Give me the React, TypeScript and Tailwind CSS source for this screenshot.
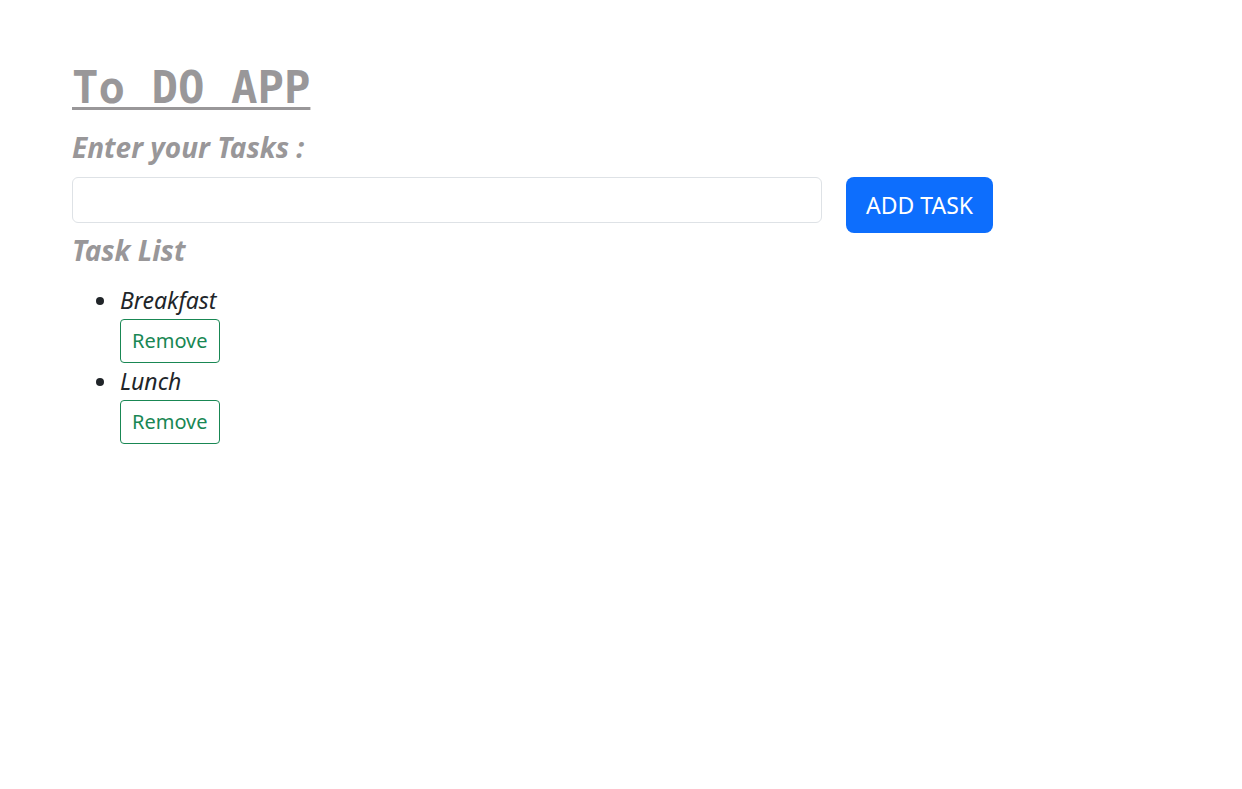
import { useState } from 'react'

const App = () => {
  const [tasks, setTasks] = useState<string[]>(['Breakfast', 'Lunch'])
  const [value, setValue] = useState('')

  const addTask = () => {
    if (!value.trim()) return
    setTasks([...tasks, value.trim()])
    setValue('')
  }

  return (
    <div className="min-h-screen bg-white pl-[72px] pt-[61px] font-['Noto_Sans',sans-serif]">
      {/* Title */}
      <h1 className="font-['DejaVu_Sans_Mono',monospace] text-[44px] font-bold leading-[53px] text-[#999799] underline decoration-[3px] underline-offset-[4px]">
        To DO APP
      </h1>

      <h3 className="mt-[16px] text-[28px] font-bold italic leading-[34px] text-[#999799]">
        Enter your Tasks :
      </h3>

      {/* Input row */}
      <div className="mt-[13px] flex items-start gap-[24px]">
        <input
          value={value}
          onChange={(e) => setValue(e.target.value)}
          className="h-[46px] w-[750px] rounded-[6px] border border-[#dee2e6] px-3 text-base outline-none"
        />
        <button
          onClick={addTask}
          className="h-[56px] rounded-[8px] bg-[#0d6efd] px-5 text-[23px] text-white"
        >
          ADD TASK
        </button>
      </div>

      <h3 className="text-[28px] font-bold italic leading-[34px] text-[#999799]">Task List</h3>

      {/* Task list */}
      <ul className="mt-[15px] pl-[48px] text-[#212529]">
        {tasks.map((task, i) => (
          <li key={i} className="relative">
            <span className="absolute left-[-24px] top-[15px] h-[8px] w-[8px] rounded-full bg-[#212529]" />
            <div className="text-[23px] italic leading-[37px]">{task}</div>
            <button
              onClick={() => setTasks(tasks.filter((_, j) => j !== i))}
              className="h-[44px] rounded-[4px] border border-[#198754] px-[11px] text-[20px] text-[#198754]"
            >
              Remove
            </button>
          </li>
        ))}
      </ul>
    </div>
  )
}

export default App
